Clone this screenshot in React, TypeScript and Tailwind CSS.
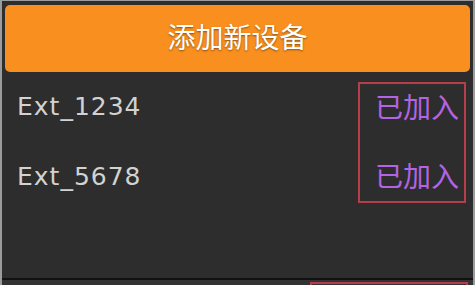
import React from 'react';

const devices = ['Ext_1234', 'Ext_5678'];

const App: React.FC = () => {
  return (
    <div
      className="w-[475px] h-[285px] overflow-hidden bg-[#9c9c9c] px-[2px] pt-[1px]"
      style={{ fontFamily: '"DejaVu Sans", "Noto Sans CJK SC", sans-serif' }}
    >
      <div className="h-full bg-[#2d2d2d] flex flex-col">
        {/* Header button */}
        <div className="px-[3px] pt-[4px]">
          <button className="w-full h-[67px] rounded-[5px] bg-[#f98f1e] text-white text-[28px] leading-none [text-shadow:0_1px_2px_rgba(0,0,0,0.45)]">
            添加新设备
          </button>
        </div>

        {/* Device list */}
        <div className="flex pl-[15px] pr-[7px]">
          <div className="flex-1 flex flex-col">
            {devices.map((d) => (
              <div key={d} className="h-[70px] flex items-center text-[25px] tracking-[1px] text-[#d2d2d2]">
                {d}
              </div>
            ))}
          </div>
          <div className="mt-[10px] w-[108px] h-[121px] border-2 border-solid border-[#b63e4a] flex flex-col items-end pr-[5px] pt-[11px] gap-[41px]">
            {devices.map((d) => (
              <span key={d} className="text-[28px] leading-[28px] text-[#b463e4]">
                已加入
              </span>
            ))}
          </div>
        </div>

        <div className="flex-1" />

        {/* Bottom bar */}
        <div className="h-[2px] bg-[#111]" />
        <div className="h-[5px] bg-[#333] flex justify-end pr-[5px] pt-[2px]">
          <div className="w-[158px] border-t-2 border-l-2 border-r-2 border-solid border-[#b63e4a]" />
        </div>
      </div>
    </div>
  );
};

export default App;
